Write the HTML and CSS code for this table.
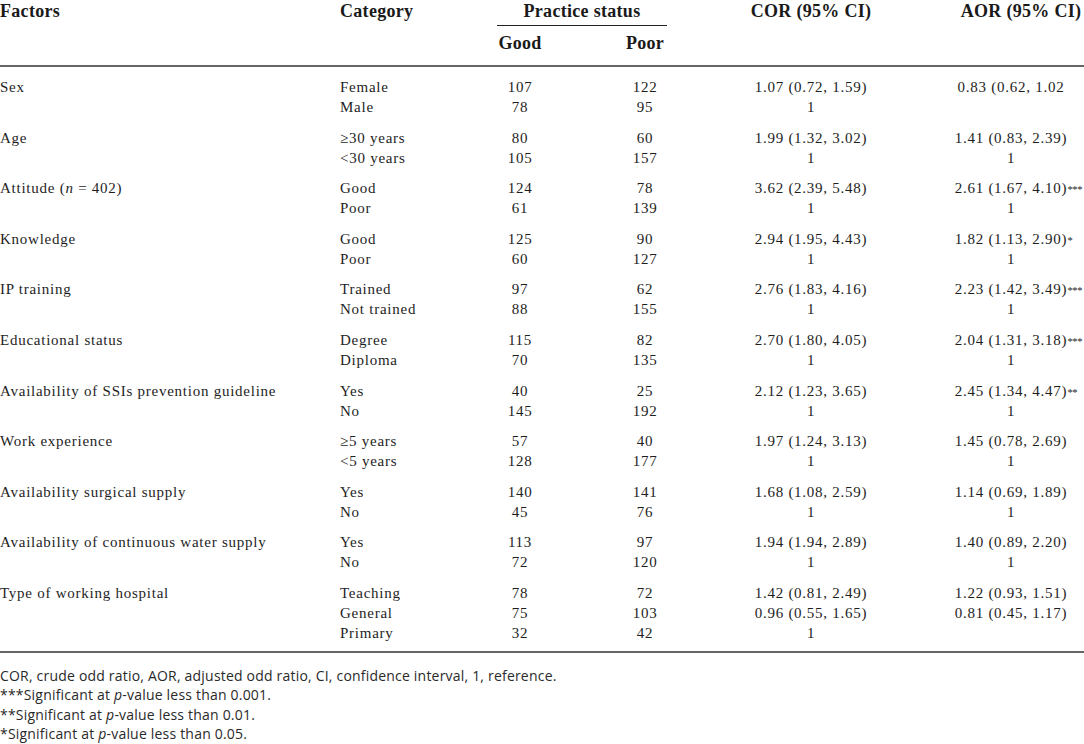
FILE: index.html
```html
<!DOCTYPE html>
<html lang="en">
<head>
<meta charset="utf-8">
<title>Factors associated with practice</title>
<link rel="stylesheet" href="styles.css">
</head>
<body>
<div class="wrap">
<table class="tbl">
  <colgroup>
    <col class="c-fac"><col class="c-cat"><col class="c-good"><col class="c-poor"><col class="c-cor"><col class="c-aor">
  </colgroup>
  <thead>
    <tr class="h1">
      <th class="left" rowspan="2">Factors</th>
      <th class="left" rowspan="2">Category</th>
      <th class="ps" colspan="2"><div class="ps-in">Practice status</div></th>
      <th class="cor" rowspan="2">COR (95% CI)</th>
      <th class="aor" rowspan="2">AOR (95% CI)</th>
    </tr>
    <tr class="h2">
      <th class="sub">Good</th>
      <th class="sub">Poor</th>
    </tr>
  </thead>
  <tbody>
    <tr class="g first"><td>Sex</td><td>Female</td><td class="n">107</td><td class="n">122</td><td class="cor">1.07 (0.72, 1.59)</td><td class="aor">0.83 (0.62, 1.02</td></tr>
    <tr><td></td><td>Male</td><td class="n">78</td><td class="n">95</td><td class="cor">1</td><td class="aor"></td></tr>

    <tr class="g"><td>Age</td><td>≥30 years</td><td class="n">80</td><td class="n">60</td><td class="cor">1.99 (1.32, 3.02)</td><td class="aor">1.41 (0.83, 2.39)</td></tr>
    <tr><td></td><td>&lt;30 years</td><td class="n">105</td><td class="n">157</td><td class="cor">1</td><td class="aor">1</td></tr>

    <tr class="g"><td>Attitude (<i>n</i> = 402)</td><td>Good</td><td class="n">124</td><td class="n">78</td><td class="cor">3.62 (2.39, 5.48)</td><td class="aor">2.61 (1.67, 4.10)<span class="sig">***</span></td></tr>
    <tr><td></td><td>Poor</td><td class="n">61</td><td class="n">139</td><td class="cor">1</td><td class="aor">1</td></tr>

    <tr class="g"><td>Knowledge</td><td>Good</td><td class="n">125</td><td class="n">90</td><td class="cor">2.94 (1.95, 4.43)</td><td class="aor">1.82 (1.13, 2.90)<span class="sig">*</span></td></tr>
    <tr><td></td><td>Poor</td><td class="n">60</td><td class="n">127</td><td class="cor">1</td><td class="aor">1</td></tr>

    <tr class="g"><td>IP training</td><td>Trained</td><td class="n">97</td><td class="n">62</td><td class="cor">2.76 (1.83, 4.16)</td><td class="aor">2.23 (1.42, 3.49)<span class="sig">***</span></td></tr>
    <tr><td></td><td>Not trained</td><td class="n">88</td><td class="n">155</td><td class="cor">1</td><td class="aor">1</td></tr>

    <tr class="g"><td>Educational status</td><td>Degree</td><td class="n">115</td><td class="n">82</td><td class="cor">2.70 (1.80, 4.05)</td><td class="aor">2.04 (1.31, 3.18)<span class="sig">***</span></td></tr>
    <tr><td></td><td>Diploma</td><td class="n">70</td><td class="n">135</td><td class="cor">1</td><td class="aor">1</td></tr>

    <tr class="g"><td>Availability of SSIs prevention guideline</td><td>Yes</td><td class="n">40</td><td class="n">25</td><td class="cor">2.12 (1.23, 3.65)</td><td class="aor">2.45 (1.34, 4.47)<span class="sig">**</span></td></tr>
    <tr><td></td><td>No</td><td class="n">145</td><td class="n">192</td><td class="cor">1</td><td class="aor">1</td></tr>

    <tr class="g"><td>Work experience</td><td>≥5 years</td><td class="n">57</td><td class="n">40</td><td class="cor">1.97 (1.24, 3.13)</td><td class="aor">1.45 (0.78, 2.69)</td></tr>
    <tr><td></td><td>&lt;5 years</td><td class="n">128</td><td class="n">177</td><td class="cor">1</td><td class="aor">1</td></tr>

    <tr class="g"><td>Availability surgical supply</td><td>Yes</td><td class="n">140</td><td class="n">141</td><td class="cor">1.68 (1.08, 2.59)</td><td class="aor">1.14 (0.69, 1.89)</td></tr>
    <tr><td></td><td>No</td><td class="n">45</td><td class="n">76</td><td class="cor">1</td><td class="aor">1</td></tr>

    <tr class="g"><td>Availability of continuous water supply</td><td>Yes</td><td class="n">113</td><td class="n">97</td><td class="cor">1.94 (1.94, 2.89)</td><td class="aor">1.40 (0.89, 2.20)</td></tr>
    <tr><td></td><td>No</td><td class="n">72</td><td class="n">120</td><td class="cor">1</td><td class="aor">1</td></tr>

    <tr class="g"><td>Type of working hospital</td><td>Teaching</td><td class="n">78</td><td class="n">72</td><td class="cor">1.42 (0.81, 2.49)</td><td class="aor">1.22 (0.93, 1.51)</td></tr>
    <tr><td></td><td>General</td><td class="n">75</td><td class="n">103</td><td class="cor">0.96 (0.55, 1.65)</td><td class="aor">0.81 (0.45, 1.17)</td></tr>
    <tr class="last"><td></td><td>Primary</td><td class="n">32</td><td class="n">42</td><td class="cor">1</td><td class="aor"></td></tr>
  </tbody>
</table>
<div class="notes">
  <p>COR, crude odd ratio, AOR, adjusted odd ratio, CI, confidence interval, 1, reference.</p>
  <p>***Significant at <i>p</i>-value less than 0.001.</p>
  <p>**Significant at <i>p</i>-value less than 0.01.</p>
  <p>*Significant at <i>p</i>-value less than 0.05.</p>
</div>
</div>
</body>
</html>
```

FILE: styles.css
```css
html, body {
  margin: 0;
  padding: 0;
  background: #ffffff;
}

.wrap {
  width: 1084px;
}

.tbl {
  width: 1084px;
  border-collapse: collapse;
  table-layout: fixed;
  font-family: "Liberation Serif", "Times New Roman", serif;
  font-size: 15px;
  letter-spacing: 0.75px;
  color: #1e1e1e;
}

.c-fac { width: 340px; }
.c-cat { width: 120px; }
.c-good { width: 120px; }
.c-poor { width: 130px; }
.c-cor { width: 202px; }
.c-aor { width: 172px; }

.tbl th {
  font-weight: bold;
  font-size: 18px;
  line-height: 18px;
  letter-spacing: 0.3px;
  padding: 2px 0 0 0;
  vertical-align: top;
  white-space: nowrap;
  color: #1a1a1a;
}

.tbl th.left { text-align: left; }
.tbl th.cor { text-align: center; }
.tbl th.aor { text-align: center; padding-left: 46px; }

.ps-in {
  margin: 0 43px 0 37px;
  padding-bottom: 5px;
  border-bottom: 1px solid #222;
  text-align: center;
}

.tbl th.sub {
  text-align: center;
  padding-top: 8px;
  padding-bottom: 13px;
}

.tbl thead {
  border-bottom: 2px solid #666;
}

.tbl tbody {
  border-bottom: 2px solid #666;
}

.tbl td {
  padding: 0;
  height: 20px;
  line-height: 20px;
  white-space: nowrap;
  text-align: left;
  vertical-align: top;
}

.tbl tr.g td { padding-top: 10.6px; }
.tbl tr.first td { padding-top: 10px; }
.tbl tr.last td { padding-bottom: 8px; }

.tbl td.n { text-align: center; }
.tbl td.cor { text-align: center; }
.tbl td.aor { text-align: center; padding-left: 26px; }

.sig {
  display: inline-block;
  width: 0;
  height: 0;
  line-height: 0;
  white-space: nowrap;
  font-size: 10.5px;
  letter-spacing: -0.3px;
  vertical-align: baseline;
}

.notes {
  margin-top: 13px;
  font-family: "Open Sans", "Noto Sans", sans-serif;
  font-size: 14px;
  letter-spacing: 0.2px;
  line-height: 19.3px;
  color: #2a2a2a;
}

.notes p {
  margin: 0;
}
```
